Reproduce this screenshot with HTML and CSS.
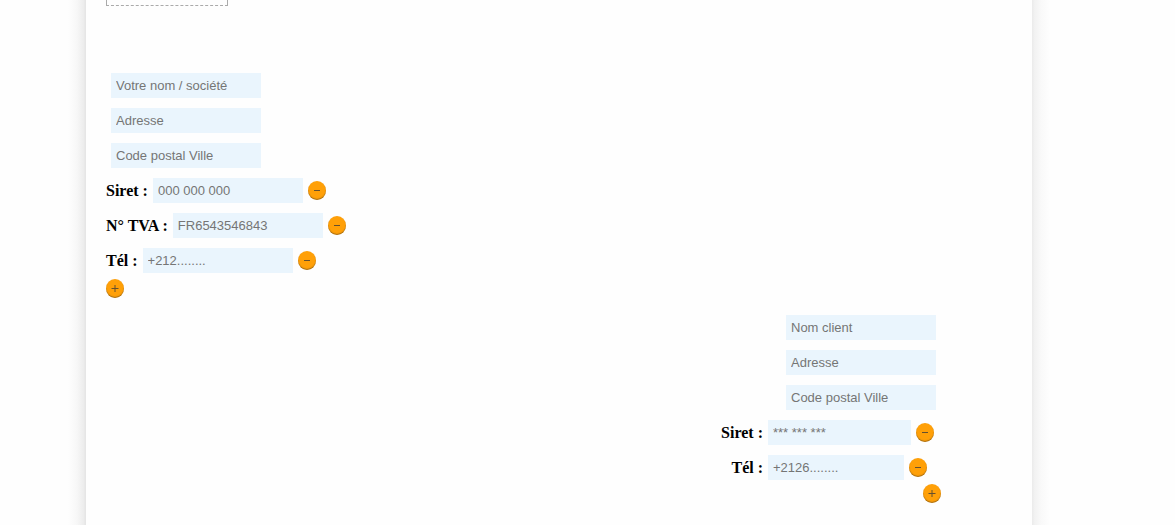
FILE: index.html
```html
<!DOCTYPE html>
<html lang="fr">
<head>
<meta charset="utf-8">
<title>Facture</title>
<link rel="stylesheet" href="styles.css">
</head>
<body>
<main class="sheet">
  <div class="logo-drop"></div>
  <form class="party seller">
    <div class="row indent"><input class="field" type="text" aria-label="Votre nom / société" placeholder="Votre nom / société"></div>
    <div class="row indent"><input class="field" type="text" aria-label="Adresse" placeholder="Adresse"></div>
    <div class="row indent"><input class="field" type="text" aria-label="Code postal Ville" placeholder="Code postal Ville"></div>
    <div class="row"><label for="s-siret">Siret :</label><input class="field" id="s-siret" type="text" placeholder="000 000 000"><button class="round" type="button" aria-label="Supprimer Siret"><svg viewBox="0 0 18 19"><path d="M6 9.5h6"/></svg></button></div>
    <div class="row"><label for="s-tva">N° TVA :</label><input class="field" id="s-tva" type="text" placeholder="FR6543546843"><button class="round" type="button" aria-label="Supprimer TVA"><svg viewBox="0 0 18 19"><path d="M6 9.5h6"/></svg></button></div>
    <div class="row"><label for="s-tel">Tél :</label><input class="field" id="s-tel" type="text" placeholder="+212........"><button class="round" type="button" aria-label="Supprimer Tél"><svg viewBox="0 0 18 19"><path d="M6 9.5h6"/></svg></button></div>
    <button class="round add" type="button" aria-label="Ajouter un champ"><svg viewBox="0 0 18 19"><path d="M5.5 9.5h7M9 6v7"/></svg></button>
  </form>
  <form class="party client">
    <div class="row names"><input class="field" type="text" aria-label="Nom client" placeholder="Nom client"></div>
    <div class="row names"><input class="field" type="text" aria-label="Adresse client" placeholder="Adresse"></div>
    <div class="row names"><input class="field" type="text" aria-label="Code postal Ville client" placeholder="Code postal Ville"></div>
    <div class="row"><label for="c-siret">Siret :</label><input class="field siret" id="c-siret" type="text" placeholder="*** *** ***"><button class="round" type="button" aria-label="Supprimer Siret client"><svg viewBox="0 0 18 19"><path d="M6 9.5h6"/></svg></button></div>
    <div class="row"><label for="c-tel">Tél :</label><input class="field tel" id="c-tel" type="text" placeholder="+2126........"><button class="round" type="button" aria-label="Supprimer Tél client"><svg viewBox="0 0 18 19"><path d="M6 9.5h6"/></svg></button></div>
    <button class="round add" type="button" aria-label="Ajouter un champ client"><svg viewBox="0 0 18 19"><path d="M5.5 9.5h7M9 6v7"/></svg></button>
  </form>
</main>
</body>
</html>
```

FILE: styles.css
```css
* {
  box-sizing: border-box;
}

body {
  margin: 0;
  background: #fefefe;
  color: #000;
  font-family: "Liberation Serif", "Times New Roman", serif;
  font-size: 16px;
}

.sheet {
  position: relative;
  min-height: 100vh;
  margin: 0 143px 0 86px;
  padding: 0 91px 20px 20px;
}

/* Soft shadow along both sides of the sheet */
.sheet::before,
.sheet::after {
  content: "";
  position: absolute;
  top: 0;
  bottom: 0;
  width: 18px;
}

.sheet::before {
  right: 100%;
  background: linear-gradient(to left, #e6e6e6 1px, #ececec 2px, #f7f7f7 9px, #fefefe);
}

.sheet::after {
  left: 100%;
  background: linear-gradient(to right, #ececec 1px, #f1f1f1 2px, #f9f9f9 9px, #fefefe);
}

.logo-drop {
  width: 122px;
  height: 6px;
  border: 1px dashed #aaa;
  border-top: 0;
}

.party {
  display: flex;
  flex-direction: column;
  gap: 10px;
}

.seller {
  margin-top: 67px;
}

.client {
  width: 220px;
  margin: 17px 0 0 auto;
}

.row {
  display: flex;
  align-items: center;
  gap: 5px;
}

.indent {
  padding-left: 5px;
}

.names {
  justify-content: flex-end;
  padding-right: 5px;
}

label {
  font-weight: bold;
  white-space: nowrap;
}

.client label {
  width: 42px;
  text-align: right;
}

.field {
  width: 150px;
  height: 25px;
  padding: 0 5px;
  border: 0;
  background: #eaf5fd;
  font: 13px/25px "Liberation Sans", Arial, sans-serif;
}

.field::placeholder {
  color: #757575;
}

.siret {
  width: 143px;
}

.tel {
  width: 136px;
}

.round {
  flex: none;
  width: 18px;
  height: 19px;
  padding: 0;
  border: 0;
  border-radius: 50%;
  background: #ffa008;
  box-shadow: inset 0 -1px 1px rgba(80, 60, 30, 0.5);
}

.round svg {
  display: block;
  width: 18px;
  height: 19px;
  fill: none;
  stroke: #65502f;
  stroke-width: 1;
}

.seller .add {
  margin-top: -4px;
}

.client .add {
  align-self: flex-end;
  margin-top: -6px;
}
```
